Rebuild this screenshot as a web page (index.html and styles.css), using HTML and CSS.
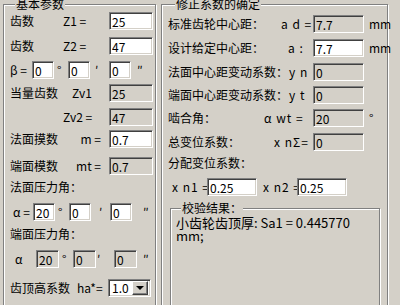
FILE: index.html
```html
<!DOCTYPE html>
<html lang="zh-CN">
<head>
    <meta charset="UTF-8">
    <title>斜齿轮参数</title>
    <link rel="stylesheet" href="styles.css">
</head>
<body>
    <div class="dialog">
        <!-- 基本参数 -->
        <fieldset class="group group-basic">
            <legend>基本参数</legend>
            <div class="rows rows-basic">
                <div class="row">
                    <span class="lbl">齿数</span><span class="sym">Z1 =</span>
                    <input class="tb" type="text" value="25">
                </div>
                <div class="row">
                    <span class="lbl">齿数</span><span class="sym">Z2 =</span>
                    <input class="tb" type="text" value="47">
                </div>
                <div class="row ang">
                    <span class="ang-lbl">β =</span>
                    <input class="tb tb-s" type="text" value="0"><span class="u u-deg">°</span>
                    <input class="tb tb-s" type="text" value="0"><span class="u u-min">′</span>
                    <input class="tb tb-s" type="text" value="0"><span class="u u-sec">″</span>
                </div>
                <div class="row">
                    <span class="lbl lbl-wide">当量齿数</span><span class="sym">Zv1</span>
                    <input class="tb off" type="text" value="25" disabled>
                </div>
                <div class="row">
                    <span class="lbl"></span><span class="sym">Zv2 =</span>
                    <input class="tb off" type="text" value="47" disabled>
                </div>
                <div class="row">
                    <span class="lbl">法面摸数</span><span class="sym sym-r">m =</span>
                    <input class="tb" type="text" value="0.7">
                </div>
                <div class="row">
                    <span class="lbl">端面模数</span><span class="sym sym-r">mt =</span>
                    <input class="tb off" type="text" value="0.7" disabled>
                </div>
                <div class="row text">法面压力角：</div>
                <div class="row ang">
                    <span class="ang-lbl ang-lbl-a">α =</span>
                    <input class="tb tb-s" type="text" value="20"><span class="u u-deg">°</span>
                    <input class="tb tb-s" type="text" value="0"><span class="u u-min u-min-a">′</span>
                    <input class="tb tb-s" type="text" value="0"><span class="u u-sec u-sec-a">″</span>
                </div>
                <div class="row text">端面压力角：</div>
                <div class="row ang ang-t">
                    <span class="ang-lbl">α</span>
                    <input class="tb tb-s off" type="text" value="20" disabled><span class="u u-deg">°</span>
                    <input class="tb tb-s off" type="text" value="0" disabled><span class="u u-min">′</span>
                    <input class="tb tb-s off" type="text" value="0" disabled><span class="u u-sec">″</span>
                </div>
                <div class="row">
                    <span class="lbl lbl-ha">齿顶高系数</span><span class="sym">ha*=</span>
                    <div class="combo">
                        <span class="combo-val">1.0</span>
                        <span class="combo-btn"><span class="arrow"></span></span>
                    </div>
                </div>
            </div>
        </fieldset>

        <!-- 修正系数的确定 -->
        <fieldset class="group group-fix">
            <legend>修正系数的确定</legend>
            <div class="rows rows-fix">
                <div class="row">
                    <span class="lbl">标准齿轮中心距：</span><span class="sym sym-ad">a d =</span>
                    <input class="tb tb-m off" type="text" value="7.7" disabled><span class="unit">mm</span>
                </div>
                <div class="row">
                    <span class="lbl">设计给定中心距：</span><span class="sym sym-a">a :</span>
                    <input class="tb tb-m" type="text" value="7.7"><span class="unit">mm</span>
                </div>
                <div class="row">
                    <span class="lbl">法面中心距变动系数：</span><span class="sym sym-y">y n</span>
                    <input class="tb tb-m off" type="text" value="0" disabled><span class="unit"></span>
                </div>
                <div class="row">
                    <span class="lbl">端面中心距变动系数：</span><span class="sym sym-y">y t</span>
                    <input class="tb tb-m off" type="text" value="0" disabled><span class="unit"></span>
                </div>
                <div class="row">
                    <span class="lbl">啮合角：</span><span class="sym sym-wt">α wt =</span>
                    <input class="tb tb-m off" type="text" value="20" disabled><span class="unit">°</span>
                </div>
                <div class="row">
                    <span class="lbl">总变位系数：</span><span class="sym sym-sum">x nΣ=</span>
                    <input class="tb tb-m off" type="text" value="0" disabled><span class="unit"></span>
                </div>
                <div class="row text">分配变位系数：</div>
                <div class="row">
                    <span class="sym sym-n1">x n1 =</span>
                    <input class="tb tb-x" type="text" value="0.25">
                    <span class="sym sym-n2">x n2 =</span>
                    <input class="tb tb-x" type="text" value="0.25">
                </div>
            </div>

            <fieldset class="group group-check">
                <legend>校验结果：</legend>
                <div class="result">
                    小齿轮齿顶厚: Sa1 = 0.445770<br>
                    mm;
                </div>
            </fieldset>
        </fieldset>
    </div>
</body>
</html>
```

FILE: styles.css
```css
body {
    margin: 0;
    width: 400px;
    height: 305px;
    overflow: hidden;
    background-color: #d4d0c8;
    color: #000;
    font: 12px/14px "Noto Sans CJK SC", sans-serif;
}
.dialog {
    display: flex;
    gap: 5px;
    height: 308px;
    margin-top: -3px;
    padding-left: 3px;
    overflow: hidden;
}
/* 分组框 (凹线) */
.group {
    box-sizing: border-box;
    margin: 0;
    padding: 0;
    border: 1px solid #808080;
    box-shadow: inset 1px 1px 0 #fff, 1px 1px 0 #fff;
}
.group legend {
    padding: 0 1px;
    margin-left: 5px;
    line-height: 14px;
    background-color: #d4d0c8;
}
.group-basic {
    width: 153px;
    height: 330px;
    padding: 1px 2px 0 6px;
}
.group-fix {
    width: 227px;
    height: 330px;
    padding: 4px 5px 0 6px;
}
.group-fix > legend {
    margin-left: 7px;
}
.group-check {
    width: 210px;
    height: 110px;
    margin-left: 2px;
    padding: 0 4px 0 5px;
}
.rows {
    display: grid;
    align-items: start;
}
.rows-basic {
    grid-template-rows: 25px 24px 23px 24px 22px 27px 24px 22px 25px 22px 29px 18px;
}
.rows-fix {
    grid-template-rows: 24px 24px 23px 23px 24px 24px 21px 23px;
}
.row {
    display: flex;
    align-items: center;
    height: 18px;
    white-space: nowrap;
}
.row.text {
    height: 12px;
    line-height: 12px;
}
.lbl {
    width: 53px;
    flex-shrink: 0;
}
.lbl-wide {
    width: 62px;
}
.lbl-ha {
    width: 67px;
}
.sym {
    flex: 1;
}
.sym-r {
    text-align: right;
    padding-right: 8px;
}
/* 文本框 */
.tb {
    box-sizing: border-box;
    width: 44px;
    height: 18px;
    margin: 0;
    padding: 0 2px;
    border: 1px solid;
    border-color: #808080 #fff #fff #808080;
    box-shadow: inset 1px 1px 0 #404040, inset -1px -1px 0 #d4d0c8;
    background-color: #fff;
    color: #000;
    font: inherit;
    outline: none;
}
.tb.off {
    background-color: #d4d0c8;
    color: #000;
}
.tb-s {
    width: 22px;
}
.tb-m {
    width: 51px;
}
.tb-x {
    width: 50px;
}
/* 角度行 */
.ang-lbl {
    width: 22px;
    flex-shrink: 0;
}
.ang-lbl-a {
    width: 20px;
    padding-left: 3px;
}
.u {
    flex-shrink: 0;
}
.u-deg {
    width: 11px;
    padding-left: 3px;
}
.u-min {
    width: 14px;
    padding-left: 5px;
}
.u-min-a {
    width: 11px;
    padding-left: 8px;
}
.u-sec {
    padding-left: 6px;
}
.u-sec-a {
    padding-left: 11px;
}
.ang-t .ang-lbl {
    width: 21px;
    padding-left: 5px;
}
.ang-t .tb-s {
    width: 23px;
}
.ang-t .u-min {
    width: 17px;
    padding-left: 1px;
}
/* 下拉框 */
.combo {
    box-sizing: border-box;
    display: flex;
    align-items: center;
    width: 43px;
    height: 18px;
    margin-left: 1px;
    margin-right: 2px;
    padding: 2px;
    border: 1px solid;
    border-color: #808080 #fff #fff #808080;
    box-shadow: inset 1px 1px 0 #404040, inset -1px -1px 0 #d4d0c8;
    background-color: #fff;
}
.combo-val {
    flex: 1;
    padding-left: 1px;
}
.combo-btn {
    box-sizing: border-box;
    display: flex;
    align-items: center;
    justify-content: center;
    width: 16px;
    height: 14px;
    border: 1px solid;
    border-color: #fff #404040 #404040 #fff;
    box-shadow: inset -1px -1px 0 #808080;
    background-color: #d4d0c8;
}
.arrow {
    width: 0;
    height: 0;
    border-left: 4px solid transparent;
    border-right: 4px solid transparent;
    border-top: 4px solid #000;
}
/* 修正系数 */
.group-fix .lbl {
    flex: 1;
    width: auto;
    overflow: visible;
}
.group-fix .sym {
    flex: none;
    letter-spacing: 1px;
}
.sym-ad {
    width: 32px;
}
.sym-a {
    width: 25px;
}
.sym-y {
    width: 24px;
}
.sym-wt {
    width: 49px;
}
.sym-sum {
    width: 39px;
}
.sym-n1 {
    width: 35px;
    padding-left: 4px;
}
.sym-n2 {
    width: 34px;
    padding-left: 6px;
}
.unit {
    width: 13px;
    padding-left: 5px;
}
.result {
    font-size: 13px;
    line-height: 13px;
    padding-top: 1px;
}
```
